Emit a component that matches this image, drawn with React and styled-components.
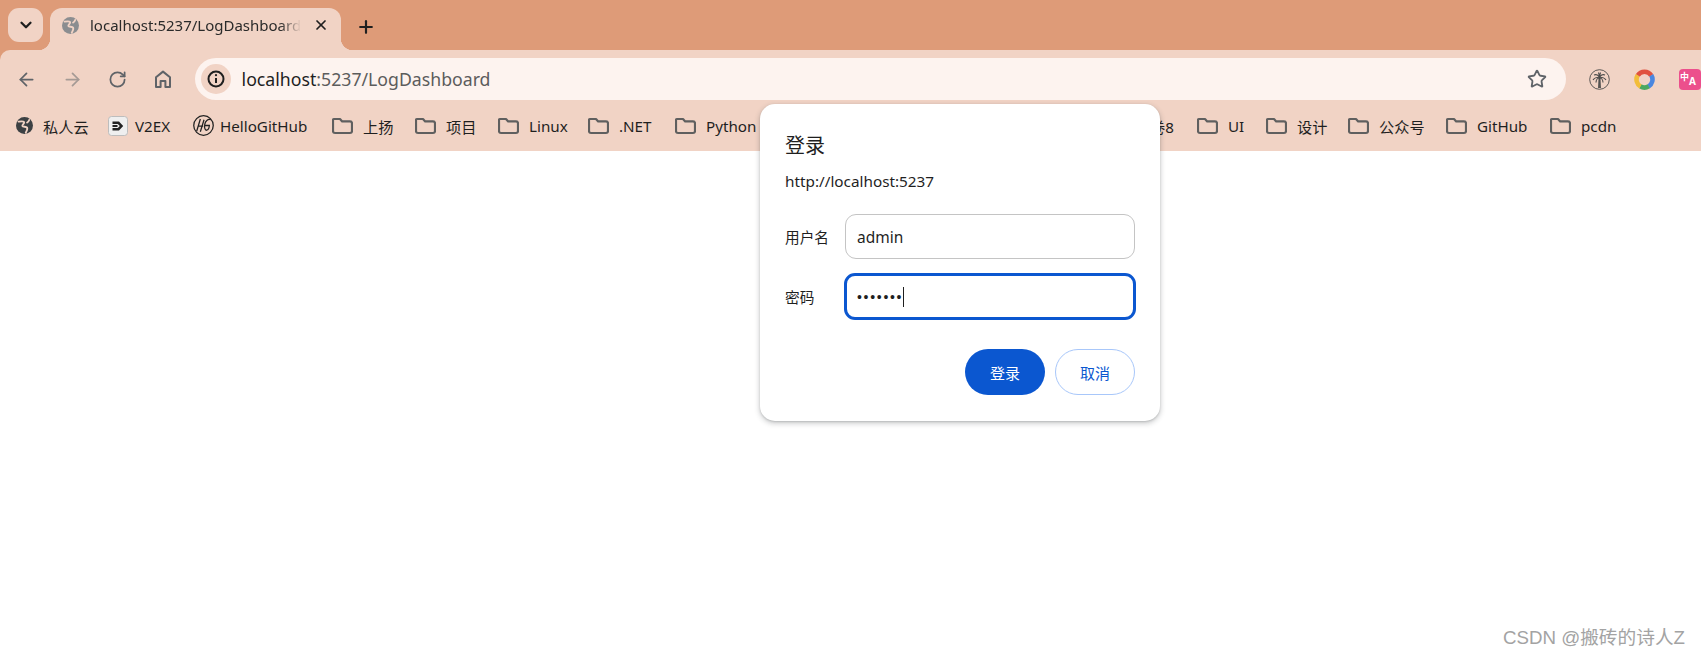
import React from "react";
import styled, { createGlobalStyle } from "styled-components";
import { ArrowLeft, ArrowRight, RotateCw, Star, X, Plus, ChevronDown } from "lucide-react";

const FONT = `"Noto Sans", "Noto Sans CJK SC", sans-serif`;
const STRIP = "#de9b78";
const CHROME = "#f1d3c5";

const Global = createGlobalStyle`
  html, body { margin: 0; padding: 0; background: #fff; overflow: hidden; }
  body { font-family: ${FONT}; color: #1f1f1f; }
`;

const Page = styled.div`
  position: relative;
  width: 1701px;
  height: 657px;
  overflow: hidden;
  background: #fff;
`;

const TabStrip = styled.div`
  display: flex;
  align-items: flex-start;
  height: 50px;
  padding: 8px 0 0 8px;
  box-sizing: border-box;
  background: ${STRIP};
`;

const TabSearch = styled.div`
  display: flex;
  align-items: center;
  justify-content: center;
  width: 35px;
  height: 34px;
  border-radius: 11px;
  background: ${CHROME};
  color: #1f1f1f;
`;

const Tab = styled.div`
  position: relative;
  display: flex;
  align-items: center;
  width: 291px;
  height: 42px;
  margin-left: 7px;
  padding: 0 12px 8px 12px;
  box-sizing: border-box;
  border-radius: 12px 12px 0 0;
  background: ${CHROME};
  &::before, &::after {
    content: "";
    position: absolute;
    bottom: 0;
    width: 12px;
    height: 12px;
  }
  &::before { left: -12px; background: radial-gradient(circle at 0 0, transparent 12px, ${CHROME} 12.5px); }
  &::after { right: -12px; background: radial-gradient(circle at 100% 0, transparent 12px, ${CHROME} 12.5px); }
`;

const TabTitle = styled.span`
  flex: 1;
  margin-left: 11px;
  overflow: hidden;
  white-space: nowrap;
  font-size: 15px;
  color: #2a2a2a;
  -webkit-mask-image: linear-gradient(to right, #000 90%, transparent 100%);
  mask-image: linear-gradient(to right, #000 90%, transparent 100%);
`;

const TabClose = styled.div`
  display: flex;
  margin-left: 12px;
  color: #1f1f1f;
`;

const NewTab = styled.div`
  display: flex;
  margin: 9px 0 0 15px;
  color: #1f1f1f;
`;

const ToolbarLayer = styled.div`
  background: ${STRIP};
`;

const Toolbar = styled.div`
  display: flex;
  align-items: center;
  height: 50px;
  padding: 8px 0 0 7px;
  box-sizing: border-box;
  background: ${CHROME};
  border-top-left-radius: 10px;
`;

const NavButton = styled.div`
  display: flex;
  align-items: center;
  justify-content: center;
  width: 40px;
  height: 42px;
  margin-right: ${p => p.$mr ?? 5}px;
  color: ${p => (p.$dim ? "#a59a95" : "#5f6368")};
`;

const Omnibox = styled.div`
  display: flex;
  align-items: center;
  width: 1375px;
  height: 42px;
  margin-left: 12px;
  padding: 0 19px 0 6px;
  box-sizing: border-box;
  border-radius: 21px;
  background: #fdf3ef;
`;

const SiteChip = styled.div`
  display: flex;
  align-items: center;
  justify-content: center;
  width: 30px;
  height: 30px;
  border-radius: 50%;
  background: ${CHROME};
  color: #1f1f1f;
`;

const UrlText = styled.div`
  flex: 1;
  margin-left: 11px;
  font-size: 17.7px;
  color: #5c5c5c;
  white-space: nowrap;
  & b { font-weight: 400; color: #1f1f1f; }
`;

const Extensions = styled.div`
  display: flex;
  align-items: center;
  gap: 24px;
  margin-left: 23px;
`;

const TranslateIcon = styled.div`
  display: flex;
  align-items: center;
  justify-content: flex-start;
  flex: none;
  width: 22px;
  height: 21px;
  padding-left: 1px;
  box-sizing: border-box;
  border-radius: 4px;
  background: #ec4f8c;
  color: #fff;
  line-height: 1;
  white-space: nowrap;
  & > span { font-size: 9px; font-weight: 700; margin-top: -6px; }
  & > b { font-size: 10px; font-weight: 700; margin-top: 4px; }
`;

const BookmarkBar = styled.div`
  display: flex;
  align-items: center;
  height: 51px;
  padding: 0 0 0 16px;
  box-sizing: border-box;
  background: ${CHROME};
`;

const Bookmark = styled.div`
  display: flex;
  align-items: center;
  flex: none;
  width: ${p => p.$w}px;
  font-size: 15.2px;
  color: #1f1f1f;
  white-space: nowrap;
  & > span { margin-left: ${p => p.$gap || 10}px; }
`;

const Dialog = styled.div`
  position: absolute;
  left: 760px;
  top: 104px;
  width: 400px;
  height: 317px;
  padding: 27px 24px 0 25px;
  box-sizing: border-box;
  background: #fff;
  border-radius: 15px;
  box-shadow: 0 2px 5px 1px rgba(60, 64, 67, .22), 0 1px 2px rgba(60, 64, 67, .2);
`;

const DialogTitle = styled.div`
  font-size: 20px;
  line-height: 30px;
  color: #1f1f1f;
`;

const Origin = styled.div`
  margin-top: 10px;
  font-size: 15.3px;
  line-height: 20px;
  color: #1f1f1f;
`;

const FieldRow = styled.div`
  display: grid;
  grid-template-columns: 60px 290px;
  align-items: center;
  margin-top: ${p => p.$mt}px;
`;

const FieldLabel = styled.div`
  font-size: 14.67px;
  color: #1f1f1f;
`;

const Field = styled.div`
  display: flex;
  align-items: center;
  height: ${p => (p.$focus ? 47 : 45)}px;
  margin: ${p => (p.$focus ? "0 -1px" : "0")};
  padding: 0 ${p => (p.$focus ? 10 : 11)}px;
  box-sizing: border-box;
  border-radius: 11px;
  border: ${p => (p.$focus ? "3px solid #0b57d0" : "1px solid #c4c4c4")};
  font-size: 15.5px;
  color: #1f1f1f;
`;

const Caret = styled.i`
  display: inline-block;
  width: 1px;
  height: 20px;
  background: #1f1f1f;
`;

const Dots = styled.span`
  font-family: "Liberation Sans", sans-serif;
  font-size: 14px;
  letter-spacing: 1.7px;
`;

const Actions = styled.div`
  display: flex;
  justify-content: flex-end;
  gap: 10px;
  margin: 29px 1px 0 0;
`;

const ActionButton = styled.div`
  display: flex;
  align-items: center;
  justify-content: center;
  width: 80px;
  height: 46px;
  box-sizing: border-box;
  border-radius: 23px;
  font-size: 15px;
  background: ${p => (p.$primary ? "#0b57d0" : "#fff")};
  color: ${p => (p.$primary ? "#fff" : "#0b57d0")};
  border: ${p => (p.$primary ? "none" : "1px solid #a8c7fa")};
`;

const Watermark = styled.div`
  position: absolute;
  right: 16px;
  top: 625px;
  font-family: "Liberation Sans", "Noto Sans CJK SC", sans-serif;
  font-size: 18.7px;
  line-height: 26px;
  color: #a3a3a3;
  white-space: nowrap;
`;

const Globe = ({ size = 17, color = "#3c4043" }) => (
  <svg width={size} height={size} viewBox="0 0 20 20" style={{ flex: "none" }}>
    <circle cx="10" cy="10" r="10" fill={color} />
    <path d="M3 5.500c2.500-.5 5.500-1 6.500.5s-2.500 3-2 4.500 4.500.5 5.500 2-.5 4-1.500 6M15.500 3.500c-.5 1.500-1 2.500-2.500 3" fill="none" stroke={CHROME} strokeWidth="2.200" strokeLinecap="round" />
  </svg>
);

const Folder = () => (
  <svg width="21" height="18" viewBox="0 0 21 18" fill="none" stroke="#5f5f5f" strokeWidth="2.2" style={{ flex: "none" }}>
    <path d="M3 2h5l2.2 2.4H18a2 2 0 0 1 2 2V14a2 2 0 0 1-2 2H3a2 2 0 0 1-2-2V3a1 1 0 0 1 1-1z" strokeLinejoin="round" />
  </svg>
);

const HomeIcon = () => (
  <svg width="20" height="20" viewBox="0 0 20 20" fill="none" stroke="#5f6368" strokeWidth="2" strokeLinejoin="round">
    <path d="M3 18V8.2L10 2.6l7 5.6V18h-4.6v-6H7.6v6z" />
  </svg>
);

const InfoIcon = () => (
  <svg width="18" height="18" viewBox="0 0 18 18" fill="none" stroke="#1f1f1f" strokeWidth="2">
    <circle cx="9" cy="9" r="7.5" />
    <path d="M9 8v5" />
    <circle cx="9" cy="5.2" r="1.1" fill="#1f1f1f" stroke="none" />
  </svg>
);

const V2exIcon = () => (
  <svg width="20" height="20" viewBox="0 0 20 20" style={{ flex: "none" }}>
    <rect x=".5" y=".5" width="19" height="19" rx="3" fill="#efefef" stroke="#bdbdbd" />
    <path d="M4.5 5.5h6.5l4.2 4.500-4.200 4.500H4.500v-2.400h5.400L11.800 10 9.900 7.900H4.500z" fill="#222" />
    <rect x="4.500" y="9" width="5" height="2" fill="#222" />
  </svg>
);

const HelloGitHubIcon = () => (
  <svg width="21" height="21" viewBox="0 0 20 20" fill="none" stroke="#222" strokeWidth="1.200" style={{ flex: "none" }}>
    <circle cx="10" cy="10" r="9.300" />
    <path d="M7 3.800 3.500 15.500M10.500 4.500 7 16M4.500 10.500h5.200M17 4.500c-3-1-5.300 1.500-5.800 4.500-.5 3 .2 5.800 1.800 5.500 1.600-.3 2.400-2.500 2.600-4.500h-4" />
  </svg>
);

const PalmIcon = () => (
  <svg width="21" height="21" viewBox="0 0 21 21" fill="none" stroke="#4a4a4a" strokeWidth=".9" style={{ flex: "none" }}>
    <circle cx="10.500" cy="10.500" r="9.800" />
    <path d="M10.500 9v10M9.500 19l.5-10M11.500 19l-.5-10" />
    <path d="M10.500 9c-1-3-3-4-5.500-3M10.500 9c1-3 3-4 5.500-3M10.500 9c-2-1-5-.5-6.500 2M10.500 9c2-1 5-.5 6.500 2M10.500 9c-1.500 0-3.500 1.500-3.500 4.500M10.500 9c1.500 0 3.500 1.500 3.500 4.500M10.500 9c0-2-.5-4-1-5.500M10.500 9c0-2 .5-4 1-5.500" strokeWidth="1.100" />
  </svg>
);

const RingIcon = () => (
  <svg width="21" height="21" viewBox="0 0 21 21" fill="none" strokeWidth="4.600" style={{ flex: "none" }}>
    <path d="M3.700 6.500A8 8 0 0 1 17.300 6.500" stroke="#e0523f" />
    <path d="M17.300 6.300A8 8 0 0 1 14.500 17.400" stroke="#4a86e0" />
    <path d="M14.700 17.300A8 8 0 0 1 6.300 17.300" stroke="#4aa860" />
    <path d="M6.500 17.400A8 8 0 0 1 3.700 6.300" stroke="#f2bd3a" />
  </svg>
);

const marks = [
  { w: 92, icon: <Globe />, text: "私人云" },
  { w: 85, icon: <V2exIcon />, text: "V2EX", gap: 7 },
  { w: 139, icon: <HelloGitHubIcon />, text: "HelloGitHub", gap: 6 },
  { w: 83, text: "上扬" },
  { w: 83, text: "项目" },
  { w: 90, text: "Linux" },
  { w: 87, text: ".NET" },
  { w: 444, text: "Python" },
  { w: 78, text: "卷8" },
  { w: 69, text: "UI" },
  { w: 82, text: "设计" },
  { w: 98, text: "公众号" },
  { w: 104, text: "GitHub" },
  { w: 70, text: "pcdn" },
];

export default function App() {
  return (
    <Page>
      <Global />
      <TabStrip>
        <TabSearch><ChevronDown size={18} strokeWidth={3} /></TabSearch>
        <Tab>
          <Globe color="#8b8d90" />
          <TabTitle>localhost:5237/LogDashboard</TabTitle>
          <TabClose><X size={16} strokeWidth={2.6} /></TabClose>
        </Tab>
        <NewTab><Plus size={20} strokeWidth={2.6} /></NewTab>
      </TabStrip>
      <ToolbarLayer>
        <Toolbar>
          <NavButton $mr={6}><ArrowLeft size={21} /></NavButton>
          <NavButton $dim><ArrowRight size={21} /></NavButton>
          <NavButton><RotateCw size={19} strokeWidth={2.2} /></NavButton>
          <NavButton $mr={0}><HomeIcon /></NavButton>
          <Omnibox>
            <SiteChip><InfoIcon /></SiteChip>
            <UrlText><b>localhost</b>:5237/LogDashboard</UrlText>
            <Star size={20} color="#5f6368" strokeWidth={2.2} />
          </Omnibox>
          <Extensions>
            <PalmIcon />
            <RingIcon />
            <TranslateIcon><span>中</span><b>A</b></TranslateIcon>
          </Extensions>
        </Toolbar>
      </ToolbarLayer>
      <BookmarkBar>
        {marks.map(m => (
          <Bookmark key={m.text} $w={m.w} $gap={m.gap}>
            {m.icon || <Folder />}
            <span>{m.text}</span>
          </Bookmark>
        ))}
      </BookmarkBar>
      <Dialog>
        <DialogTitle>登录</DialogTitle>
        <Origin>http://localhost:5237</Origin>
        <FieldRow $mt={23}>
          <FieldLabel>用户名</FieldLabel>
          <Field>admin</Field>
        </FieldRow>
        <FieldRow $mt={14}>
          <FieldLabel>密码</FieldLabel>
          <Field $focus><Dots>•••••••</Dots><Caret /></Field>
        </FieldRow>
        <Actions>
          <ActionButton $primary>登录</ActionButton>
          <ActionButton>取消</ActionButton>
        </Actions>
      </Dialog>
      <Watermark>CSDN @搬砖的诗人Z</Watermark>
    </Page>
  );
}
